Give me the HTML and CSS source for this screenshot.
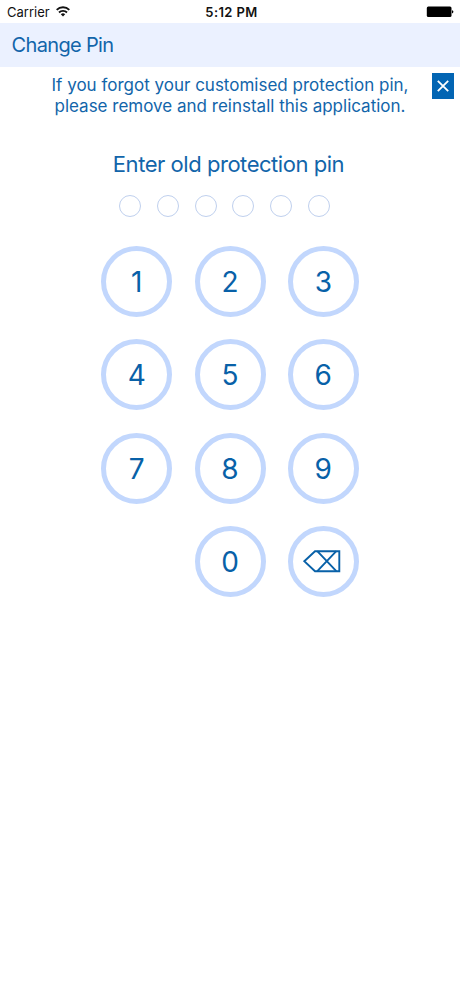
FILE: index.html
```
<!DOCTYPE html>
<html>
  <head>
    <meta charset="utf-8">
    <meta name="viewport" content="width=device-width, initial-scale=1">
    <title>Change Pin</title>
    <link rel="stylesheet" href="styles.css">
  </head>
  <body>
    <div class="status">
      <div class="carrier">
        <span>Carrier</span>
        <svg class="wifi" viewBox="0 0 14 11" fill="none" stroke="#111" stroke-width="1.9">
          <path d="M.7 3.9a8.9 8.9 0 0 1 12.6 0" />
          <path d="M3 6.5a5.7 5.7 0 0 1 8 0" />
          <path d="M4.8 8.3a3.1 3.1 0 0 1 4.4 0L7 10.6z" fill="#111" stroke="none" />
        </svg>
      </div>
      <span class="time">5:12 PM</span>
      <div class="power">
        <svg class="battery" viewBox="0 0 28 12">
          <rect x=".8" y=".5" width="24.7" height="10.5" rx="1.5" />
          <path d="M26 4.2q1.4.2 1.4 1.6T26 7.4z" />
        </svg>
      </div>
    </div>
    <header class="header"><span class="title">Change Pin</span></header>
    <main class="content">
      <div class="notice">
        <p class="message">If you forgot your customised protection pin,<br>please remove and reinstall this application.</p>
        <button class="close" aria-label="Close">
          <svg viewBox="0 0 12 12" width="12" height="12" stroke="#fff" stroke-width="1.8">
            <path d="M.8.8l10.4 10.4M11.2.8L.8 11.2" />
          </svg>
        </button>
      </div>
      <h1 class="prompt">Enter old protection pin</h1>
      <div class="dots">
        <i></i><i></i><i></i><i></i><i></i><i></i>
      </div>
      <div class="keypad">
        <button class="key">1</button>
        <button class="key">2</button>
        <button class="key">3</button>
        <button class="key">4</button>
        <button class="key">5</button>
        <button class="key">6</button>
        <button class="key">7</button>
        <button class="key">8</button>
        <button class="key">9</button>
        <button class="key zero">0</button>
        <button class="key" aria-label="Delete">
          <svg class="delete" viewBox="0 0 38 23" fill="none" stroke="#0861a8" stroke-width="1.9">
            <path d="M1.3 11.2L12 1.2h24.3v20H12z" />
            <path d="M14.3 1.2l19 20M33.3 1.2l-19 20" />
          </svg>
        </button>
      </div>
    </main>
  </body>
</html>
```

FILE: styles.css
```
* {
  box-sizing: border-box;
}

body {
  margin: 0;
  background: #fff;
  color: #1265aa;
  font-family: Inter, "Liberation Sans", sans-serif;
}

button {
  padding: 0;
  font-family: inherit;
}

.status {
  display: grid;
  grid-template-columns: 1fr auto 1fr;
  align-items: center;
  height: 22.5px;
  padding: 1px 6px 0 7px;
  color: #111;
  font-size: 13px;
}

.carrier {
  display: flex;
  align-items: center;
  gap: 6px;
}

.wifi {
  width: 14px;
  height: 11px;
}

.time {
  padding-left: 2px;
  font-weight: 600;
  letter-spacing: 0.4px;
}

.power {
  display: flex;
  justify-content: flex-end;
}

.battery {
  width: 28px;
  height: 12px;
}

.header {
  display: flex;
  align-items: center;
  height: 44.5px;
  padding-left: 11.5px;
  background: #ebf1ff;
  font-size: 20px;
}

.title {
  letter-spacing: -0.65px;
}

.notice {
  display: grid;
  grid-template-columns: 1fr 360px 1fr;
  padding: 6.4px 6px 0;
}

.message {
  grid-column: 2;
  margin: 0;
  padding-top: 1.4px;
  text-align: center;
  white-space: nowrap;
  font-size: 17px;
  line-height: 21px;
}

.close {
  display: flex;
  align-items: center;
  justify-content: center;
  justify-self: end;
  width: 22px;
  height: 25.6px;
  padding-bottom: 1px;
  border: 0;
  background: #0365b3;
}

.prompt {
  margin: 33.2px 0 0;
  padding-right: 3px;
  text-align: center;
  font-size: 22px;
  font-weight: 400;
  line-height: 28px;
  letter-spacing: -0.46px;
}

.dots {
  display: flex;
  justify-content: center;
  gap: 15.6px;
  margin-top: 17px;
  padding-right: 11px;
}

.dots i {
  width: 22.2px;
  height: 22.2px;
  border: 1.5px solid #bfd0ee;
  border-radius: 50%;
}

.keypad {
  display: grid;
  grid-template-columns: repeat(3, 71px);
  justify-content: center;
  gap: 22.3px;
  margin-top: 29px;
}

.key {
  display: flex;
  align-items: center;
  justify-content: center;
  height: 71px;
  padding: 1px 0 0;
  border: 5px solid #c2d7fd;
  border-radius: 50%;
  background: #fff;
  color: #0861a8;
  font-size: 28px;
}

.zero {
  grid-column: 2;
}

.delete {
  width: 38px;
  height: 23px;
  margin: 0 2px 2px 0;
}
```
